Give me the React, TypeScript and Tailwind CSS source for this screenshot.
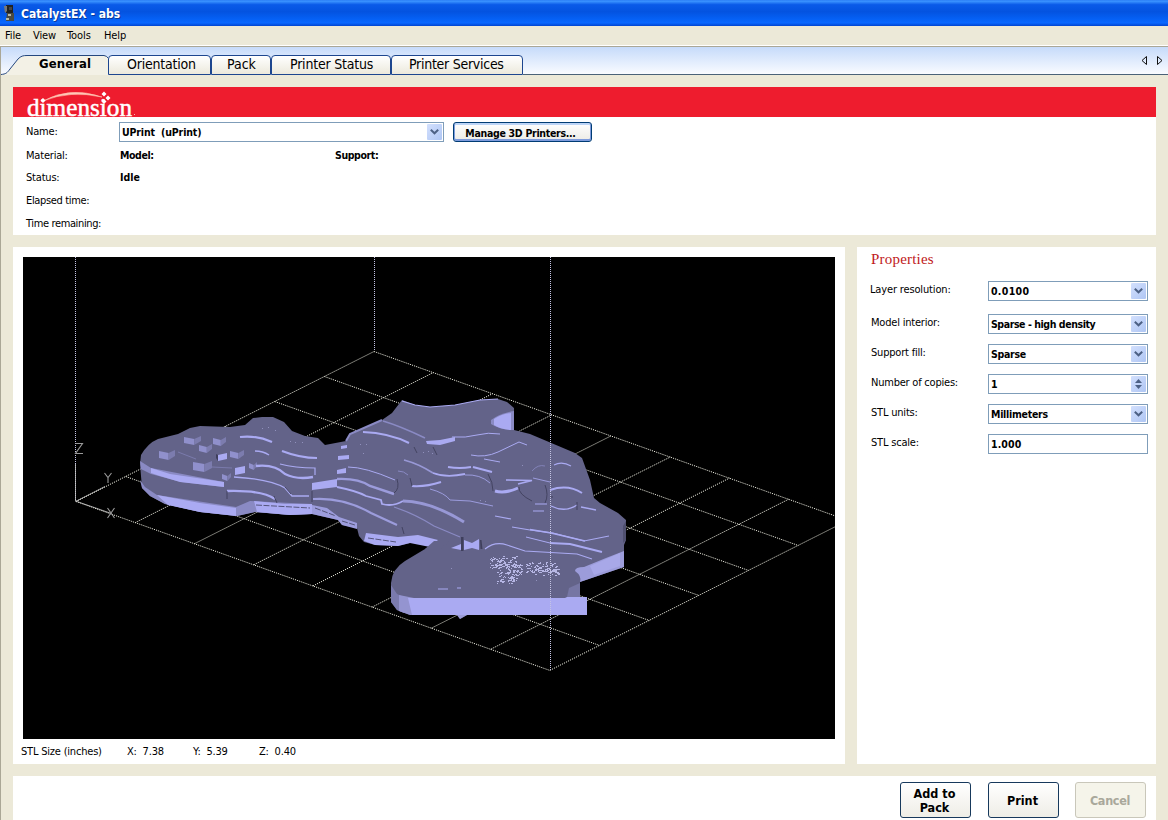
import React from "react";

const LIGHT = "#aaaaf2";
const MID = "#8a8ac4";
const BASE = "#636389";
const DARK = "#3f3f5c";

function gridLines() {
  const out: number[][] = [];
  for (let i = 0; i <= 8; i++) {
    const x = 76 + i * 59.25;
    const y = 501.5 + i * 21.1;
    out.push([x, y, x + 298, y - 150]);
  }
  for (let j = 0; j <= 6; j++) {
    const x = 76 + j * 49.67;
    const y = 501.5 - j * 25;
    out.push([x, y, x + 474, y + 169]);
  }
  return out;
}

function speckles() {
  const out: number[][] = [];
  let s = 7;
  const rnd = () => {
    s = (s * 16807) % 2147483647;
    return s / 2147483647;
  };
  const areas = [
    [490, 556, 27, 12, 80],
    [497, 564, 25, 10, 65],
    [497, 572, 20, 11, 55],
    [526, 562, 30, 10, 75],
    [534, 567, 25, 8, 45],
  ];
  areas.forEach(([x, y, w, h, n]) => {
    for (let i = 0; i < n; i++) out.push([Math.round(x + rnd() * w), Math.round(y + rnd() * h), rnd() > 0.5 ? 2 : 1]);
  });
  return out;
}

/* Small cubes standing on the left lobe: x, y, width, height */
const cubes = [
  [159, 449, 16, 11],
  [184, 435, 17, 10],
  [199, 443, 13, 10],
  [213, 436, 13, 10],
  [193, 460, 19, 12],
  [230, 449, 14, 10],
  [249, 461, 8, 9],
  [222, 472, 9, 9],
];

const ridges: [string, number, string][] = [
  ["M240 437 Q256 435 272 442", 2.2, LIGHT],
  ["M255 451 Q263 451 269 455", 1.5, LIGHT],
  ["M282 451 Q300 458 317 458", 2, LIGHT],
  ["M256 466 Q275 464 285 474 Q297 480 313 477", 2.4, LIGHT],
  ["M280 464 Q295 468 315 468 V475", 1.2, LIGHT],
  ["M234 477 Q270 479 285 488 L292 496 L309 496", 1.4, LIGHT],
  ["M227 491 Q262 490 275 499", 2.4, LIGHT],
  ["M383 421 Q400 426 425 438", 1.6, MID],
  ["M363 432 Q389 433 409 443", 2, LIGHT],
  ["M348 467 Q365 467 395 480", 1, LIGHT],
  ["M337 479 Q358 478 370 486 L394 494", 2.4, "#9c9cdc"],
  ["M337 487 Q357 491 366 496 L381 500 L382 504 Q393 507 403 501", 1.8, LIGHT],
  ["M403 501 Q430 501 464 522", 3, "#9898d6"],
  ["M313 499 Q343 497 371 513 L397 525", 2.2, "#9c9cdc"],
  ["M394 507 Q415 514 434 526 L460 537", 1.2, MID],
  ["M398 471 Q404 471 408 475", 1, MID],
  ["M404 460 Q419 464 433 473", 1.8, "#9898d6"],
  ["M433 473 Q446 478 465 474", 1.8, LIGHT],
  ["M412 486 Q426 487 441 482", 2, LIGHT],
  ["M430 489 Q445 493 450 500 L470 501 L493 506", 0.8, LIGHT],
  ["M452 437 Q466 438 477 435 Q488 432 500 434", 1, LIGHT],
  ["M471 455 Q485 458 498 452 L519 442 L527 445", 1, LIGHT],
  ["M448 467 Q460 469 471 467", 1.8, LIGHT],
  ["M473 467 L492 472", 2.2, LIGHT],
  ["M484 459 L500 462", 1, LIGHT],
  ["M465 475 Q480 474 490 483", 0.8, LIGHT],
  ["M495 491 Q505 494 518 488", 3, LIGHT],
  ["M506 480 L532 480.500 L518 484", 1.5, LIGHT],
  ["M533 478 L550 482", 0.8, LIGHT],
  ["M554 465 Q562 461 571 466", 1.2, LIGHT],
  ["M532 471 Q538 464 545 466", 0.8, MID],
  ["M550 490 Q568 484 582 493", 2, LIGHT],
  ["M551 506 Q565 513 577 505", 1.3, LIGHT],
  ["M581 507 L596 510", 1.3, LIGHT],
  ["M535 504 L547 504 M533 511 L544 511", 1, LIGHT],
  ["M495 516 L511 519", 1.2, LIGHT],
  ["M512 527 L530 530 L553 533 L584 541 L609 536", 1.2, LIGHT],
  ["M530 529.500 L551 533 L585 541", 1.6, LIGHT],
  ["M526 537 L550 543", 1, LIGHT],
  ["M550 543 L570 544 L602 552", 2, LIGHT],
  ["M485 549 Q495 541 507 545 L525 551 L577 554 L592 559", 1.1, LIGHT],
  ["M438 589 h10 M457 588 h4", 1, LIGHT],
  ["M178 452 L196 459 M212 467 L232 468", 0.6, MID],
];

const shadows = [
  "M227 491 V499",
  "M274 496 L277 503",
  "M285 487 L291 494",
  "M312 491 V502",
  "M397 479 Q400 489 394 493",
  "M402 527 L404 534",
  "M414 447 L417 453",
  "M433 447 L437 455",
  "M410 478 L412 486",
  "M488 474 Q493 482 493 491",
  "M519 487 Q518 494 532 501 M545 485 Q549 495 545 503",
  "M577 502 V510",
  "M550 497 H553",
];

function Viewport() {
  return (
    <svg className="block h-[482px] w-[812px] bg-black" viewBox="23 257 812 482">
      <g stroke="#e4e4d8" strokeWidth="1" strokeDasharray="1.2 1.035">
        {gridLines().map(([a, b, c, d], i) => (
          <line key={i} x1={a} y1={b} x2={c} y2={d} />
        ))}
      </g>
      <g stroke="#c4c4e4" strokeDasharray="1 1" shapeRendering="crispEdges">
        <path d="M75.500 257V501M374.500 257V351" />
      </g>
      <path d="M75.500 464V501L110 513M75.500 501.500L105 486.500" stroke="#c8c8c8" fill="none" strokeWidth="0.8" />

      <path
        fill={BASE}
        d="M140 464 L141 455 Q148 443 158 439 L178 434 L190 428 L200 426 L230 427 L245 425 L253 418 L262 417 L273 417 L284 422 L292 431 L305 436 L318 438 L325 445 L346 441 L350 434 L382 420 L392 413 L402 400 L415 405 L430 407 L455 405 L480 400 L498 399 L507 402 L514 408 V430 L530 434 L575 453 L582 458 L590 480 L594 498 L600 503 L618 513 L626 520 L626 540 L624 545 V567 L580 582 V597 H587 V615 H467 L460 619 L457 615 H410 L397 610 L391 602 V583 Q392 569 405 561 L425 549 L438 541 L410 543 L398 546 L375 545 L364 542 L359 536 L357 528 L342 525 L338 520 L325 517 L312 514 L290 515 L255 512 L237 516 L200 512 L165 504 L150 496 L142 488 Z"
      />
      <path fill={MID} d="M140 461 L151 468 L224 482 V487 L181 482 L151 474 L141 469Z" />
      <path fill={LIGHT} d="M151 468 L170 474 L224 482 V487 L180 482 L160 476 L151 473Z" />
      <path fill={MID} d="M140 480 L145 487 L157 495 L236 507 L250 501 L312 504 V514 L290 515 L255 512 L237 516 L200 512 L165 504 L150 496 L142 488 Z" />
      <path fill={LIGHT} d="M157 495 L200 503 L236 508 V516 L200 512 L168 505Z M254 501 L285 504 L312 504 V514 L290 515 L257 512Z" />
      <path fill="#9c9cdc" d="M312 505 L327 508 L339 517 L357 523 V529 L342 525 L338 520 L325 517 L312 514Z" />
      <path fill={LIGHT} d="M366 533 L398 537 L418 535 L438 540 L430 547 L410 543 L398 546 L375 545 L364 541Z" />
      <path fill={BASE} d="M425 549 L434 541 L450 541 L440 549Z" />
      <path d="M256 505 L310 508 M315 508 L336 516 M342 521 L355 525 M368 538 L396 542" stroke={DARK} strokeWidth="0.8" strokeDasharray="6 1.500" fill="none" />
      <path fill={LIGHT} d="M312 483 L337 479 V487 L312 490Z M341 446 l6 -1 v3 l-6 1z M338 456 l11 -1 v4 l-11 1z M337 470 l9 -2 v5 l-9 1z" />
      <path d="M346 441 L350 434 L382 420" stroke={MID} strokeWidth="2" fill="none" />
      <path d="M402 401 L415 405 L430 407 L455 405 L480 400 L498 399" stroke={LIGHT} strokeWidth="1.200" fill="none" />
      <path fill={MID} d="M491 420 Q500 413 514 411 V430 Q500 430 491 424Z" />
      <path fill={LIGHT} d="M494 419 Q502 414 511 413 V430 Q500 429 494 425Z" />
      <path fill={LIGHT} d="M426 441 L440 440 L455 437 V441 L440 445 L427 444Z" />

      {cubes.map(([x, y, w, h], i) => (
        <g key={i}>
          <path fill="#9090cc" d={`M${x} ${y + 2} L${x + w * 0.6} ${y + 4} V${y + h} L${x} ${y + h - 2}Z`} />
          <path fill="#7c7cae" d={`M${x + w * 0.6} ${y + 4} L${x + w} ${y + 1} V${y + h - 4} L${x + w * 0.6} ${y + h}Z`} />
        </g>
      ))}
      <path fill={LIGHT} d="M218 455 l9 -2 v6 l-9 2z M235 468 l10 -2 v7 l-10 2z" />
      <path fill={DARK} d="M216 454 l2 1 v6 l-2 -3z" />

      <g fill="none">
        {ridges.map(([d, w, c], i) => (
          <path key={i} d={d} strokeWidth={w} stroke={c} />
        ))}
        {shadows.map((d, i) => (
          <path key={i} d={d} stroke={DARK} strokeWidth="0.900" />
        ))}
      </g>
      <path fill={LIGHT} d="M464 540 L472 543 L479 539 V550 L472 548 L464 550Z M451 548 L461 544 V550Z" />
      <path fill={DARK} d="M461 537 h2.500 v14 h-2.500z M480 540 h1.500 l1 9 h-2z" />

      <path fill="#7a7aae" d="M391 585 L397 594 L404 597 V613 L397 610 L391 602Z" />
      <path fill="#9494d0" d="M399 595 L414 598 V615 H410 L399 611Z" />
      <path fill={LIGHT} d="M408 598 H565 L567 597 H587 V615 H412Z" />
      <path fill="#9c9cd8" d="M457 615 H467 L460 619Z" />
      <path fill="#7676a4" d="M567 597 L569 588 L580 583 V597Z" />
      <path fill="#9c9cda" d="M575 571 Q575 567 584 567 L606 558 L624 551 V567 L580 582 Q582 576 575 571Z" />
      <path fill="#a8a8e8" d="M590 566 L620 553 V566 L594 575Z" />
      <path fill="#505070" d="M623 526 L626 521 V540 L623 543Z" />

      <g fill="#b6b6e4" shapeRendering="crispEdges">
        {speckles().map(([x, y, w], i) => (
          <rect key={i} x={x} y={y} width={w} height="1" />
        ))}
      </g>
      <g fill="#9090bc" shapeRendering="crispEdges">
        {[[262, 428], [268, 427], [275, 430], [290, 441], [295, 442], [302, 442], [360, 444], [366, 444], [363, 453], [423, 452], [428, 451], [432, 453], [522, 465], [480, 500], [485, 501], [451, 568], [536, 580]].map(([x, y], i) => (
          <rect key={i} x={x} y={y} width="1" height="1" />
        ))}
      </g>
      <path d="M550.500 257V670" stroke="#c4c4e4" strokeDasharray="1 1" shapeRendering="crispEdges" />
      <g fill="none" stroke="#9a9a9a" strokeWidth="1.100">
        <path d="M75.500 443.500H82.500L75.500 453.500H83" />
        <path d="M104.500 473L108 477.500L111.500 473M108 477.500V483" />
        <path d="M107.500 508L114.500 518M114.500 508L107.500 518" />
      </g>
    </svg>
  );
}

function DropArrow() {
  return (
    <span className="flex h-4 w-[15px] shrink-0 items-center justify-center rounded-[1px] bg-linear-to-br from-[#d3e0fd] to-[#afc6f4]">
      <svg width="9" height="6" viewBox="0 0 9 6">
        <path d="M0.800 0.800L4.500 4.300L8.200 0.800" fill="none" stroke="#4d6185" strokeWidth="2" />
      </svg>
    </span>
  );
}

function Spinner() {
  return (
    <span className="flex h-4 w-[15px] shrink-0 flex-col items-center justify-between rounded-[1px] bg-linear-to-br from-[#d3e0fd] to-[#afc6f4] py-[3px]">
      <svg width="7" height="4" viewBox="0 0 7 4"><path d="M0 4L3.500 0L7 4Z" fill="#4d6185" /></svg>
      <svg width="7" height="4" viewBox="0 0 7 4"><path d="M0 0L3.500 4L7 0Z" fill="#4d6185" /></svg>
    </span>
  );
}

function Field({ text, track = "", kind = "select" }: { text: string; track?: string; kind?: "select" | "spin" | "text" }) {
  return (
    <div className="flex h-5 w-[160px] items-center justify-between border border-[#7f9db9] bg-white pr-px pl-[2px] text-[10.5px] font-bold">
      <span className={track}>{text}</span>
      {kind === "select" && <DropArrow />}
      {kind === "spin" && <Spinner />}
    </div>
  );
}

const tabs = [
  { label: "Orientation", box: "w-[103px] pl-[18px]", track: "tracking-[-0.2px]" },
  { label: "Pack", box: "w-[60px] pl-[15px]", track: "" },
  { label: "Printer Status", box: "w-[120px] pl-[18px]", track: "tracking-[-0.2px]" },
  { label: "Printer Services", box: "w-[132px] pl-[17px]", track: "tracking-[-0.27px]" },
];

const properties: { label: string; text: string; kind?: "select" | "spin" | "text"; h: string; track?: string; labelTrack: string }[] = [
  { label: "Layer resolution:", text: "0.0100", h: "h-[33px]", track: "tracking-[0.3px]", labelTrack: "-ml-px w-[118px] tracking-[-0.15px]" },
  { label: "Model interior:", text: "Sparse - high density", h: "h-[30px]", track: "tracking-[-0.43px]", labelTrack: "w-[117px] tracking-[-0.2px]" },
  { label: "Support fill:", text: "Sparse", h: "h-[30px]", track: "tracking-[-0.3px]", labelTrack: "w-[117px] tracking-[-0.2px]" },
  { label: "Number of copies:", text: "1", kind: "spin", h: "h-[30px]", labelTrack: "w-[117px] tracking-[-0.22px]" },
  { label: "STL units:", text: "Millimeters", h: "h-[30px]", track: "tracking-[-0.27px]", labelTrack: "w-[117px] tracking-[-0.2px]" },
  { label: "STL scale:", text: "1.000", kind: "text", h: "h-[30px]", track: "tracking-[0.1px]", labelTrack: "w-[117px] tracking-[-0.2px]" },
];

export default function App() {
  return (
    <div className="flex h-[820px] w-[1168px] flex-col overflow-hidden bg-[#ece9d8] font-['DejaVu_Sans_Condensed','Noto_Sans',sans-serif] text-[11px] leading-[14px] whitespace-pre text-black">
      <header className="flex h-[26px] shrink-0 items-center bg-[linear-gradient(180deg,#2b7df5_0%,#3a92ff_5%,#0a5ae8_18%,#0453e0_45%,#0560f4_72%,#0a68ff_88%,#0144d0_100%)] pl-1">
        <svg width="11" height="18" viewBox="0 0 11 18" className="mb-px">
          <path d="M2 1H9V9H2Z" fill="#222" />
          <path d="M0 2H3V7L1 9Z" fill="#777" />
          <path d="M3 9H10V17H2Z" fill="#4a4a42" />
          <path d="M4 10H7V12H4ZM2 14H5V16H2Z" fill="#b8b8a8" />
          <path d="M5 3H8V6H5Z" fill="#444" />
        </svg>
        <span className="ml-[6px] pt-px text-[12px] font-bold text-white [text-shadow:1px_1px_0_#0a3a9a]">CatalystEX - abs</span>
      </header>

      <nav className="flex h-[19px] shrink-0 items-center pl-[5px] tracking-[-0.1px]">
        <span className="w-7">File</span>
        <span className="w-[34px]">View</span>
        <span className="w-[37px]">Tools</span>
        <span>Help</span>
      </nav>

      <div className="h-px shrink-0 bg-white" />
      <div className="flex h-[29px] shrink-0 items-end border-t border-l border-[#aaa796] bg-linear-to-b from-[#c6dbfa] to-[#fbfcff] text-[14px]">
        <div className="relative h-5 w-[107px]">
          <svg className="absolute inset-0" width="107" height="20" viewBox="0 0 107 20">
            <path d="M0 20V19.500C5 19 6 18 9 14L17 4C20 1 22 0.500 26 0.500H103Q107 1 107 4V20Z" fill="#f3f1e6" />
            <path d="M0 19.500C5 19 6 18 9 14L17 4C20 1 22 0.500 26 0.500H103Q106 1 107 3" fill="none" stroke="#24477f" />
          </svg>
          <span className="relative block pt-[2px] pl-[38px] text-[13px] font-bold tracking-[0.1px]">General</span>
        </div>
        {tabs.map((t) => (
          <div key={t.label} className={`h-5 rounded-t-[4px] border border-[#1d468f] bg-linear-to-b from-white to-[#ece9dc] pt-px ${t.box}`}>
            <span className={t.track}>{t.label}</span>
          </div>
        ))}
        <div className="flex h-full flex-1 items-center justify-end gap-2 border-b border-[#4a6278] pr-[5px]">
          <svg width="7" height="9" viewBox="0 0 7 9"><path d="M5.500 0.500V8.500L1 4.500Z" fill="none" stroke="#111" /></svg>
          <svg width="7" height="9" viewBox="0 0 7 9"><path d="M1.500 0.500V8.500L6 4.500Z" fill="none" stroke="#111" /></svg>
        </div>
      </div>

      <main className="flex flex-1 flex-col gap-3 border-l border-[#aaa796] pt-3 pr-3 pl-3">
        <section className="h-[148px] shrink-0 bg-white">
          <div className="h-[30px] bg-[#ee1c2e]">
            <svg width="140" height="30" viewBox="13 87 140 30" className="block overflow-visible">
              <text x="27" y="115.500" textLength="105" lengthAdjust="spacingAndGlyphs" fill="#fff" stroke="#fff" strokeWidth="0.500" fontFamily="Liberation Serif, serif" fontSize="25">dimension</text>
              <path d="M43 101Q70 86 102 97Q70 90 43 101Z" fill="#ffc9b8" stroke="#ffb9a8" strokeWidth="0.600" />
              <path d="M43 98l2.500 2.500L43 103l-2.500-2.500ZM104 91.500l2.500 2.500-2.500 2.500-2.500-2.500ZM108 95.500l2.500 2.500-2.500 2.500-2.500-2.500ZM104 99l2.500 2.500-2.500 2.500-2.500-2.500Z" fill="#fff" />
              <rect x="134" y="114" width="1" height="1" fill="#ffb0b0" />
            </svg>
          </div>
          <div className="flex pl-[13px]">
            <div className="w-[93px] tracking-[-0.2px]">
              <div className="flex h-[27px] items-center pt-[2px]">Name:</div>
              <div className="flex h-[22px] items-center pt-px">Material:</div>
              <div className="flex h-[23px] items-center">Status:</div>
              <div className="flex h-[23px] items-center tracking-[-0.35px]">Elapsed time:</div>
              <div className="flex h-[23px] items-center tracking-[-0.37px]">Time remaining:</div>
            </div>
            <div className="text-[10.5px] font-bold">
              <div className="flex h-[27px] items-start pt-[5px]">
                <div className="flex h-5 w-[325px] items-center justify-between border border-[#7f9db9] pr-px pl-[2px]">
                  <span className="tracking-[-0.15px]">UPrint  (uPrint)</span>
                  <DropArrow />
                </div>
                <button className="ml-[9px] flex h-5 w-[139px] items-center justify-center rounded-[3px] border border-[#003c74] bg-linear-to-b from-white to-[#ecebe5] pt-px pr-1 shadow-[inset_0_-1px_0_1px_#7d9bdc,inset_0_1px_0_1px_#bcd4f6]">
                  <span className="tracking-[-0.3px]">Manage 3D Printers...</span>
                </button>
              </div>
              <div className="flex h-[22px] items-center pl-px tracking-[-0.4px]">
                <span className="w-[215px]">Model:</span>
                <span>Support:</span>
              </div>
              <div className="flex h-[23px] items-center pb-px pl-px">Idle</div>
            </div>
          </div>
        </section>

        <div className="flex h-[517px] shrink-0 gap-3">
          <section className="w-[832px] bg-white pt-[10px] pl-[10px]">
            <Viewport />
            <div className="flex pt-[6px] tracking-[-0.2px]">
              <span className="-ml-[2px] w-[106px]">STL Size (inches)</span>
              <span className="w-[66px]">X:  7.38</span>
              <span className="w-[66px]">Y:  5.39</span>
              <span>Z:  0.40</span>
            </div>
          </section>
          <section className="flex-1 bg-white pl-[14px]">
            <h2 className="pt-[3px] font-['Liberation_Serif',serif] text-[15px] leading-[18px] tracking-[0.2px] text-[#c01820]">Properties</h2>
            <div className="pt-[13px]">
              {properties.map((p) => (
                <div key={p.label} className={`flex items-start ${p.h}`}>
                  <span className={`pt-[2px] ${p.labelTrack}`}>{p.label}</span>
                  <Field text={p.text} kind={p.kind} track={p.track} />
                </div>
              ))}
            </div>
          </section>
        </div>

        <footer className="flex flex-1 items-start justify-end bg-white pt-[6px] pr-[10px] text-[12.5px] leading-[14px] font-bold">
          <button className="flex h-9 w-[71px] items-center justify-center rounded-[3px] border border-[#17395c] bg-linear-to-b from-white to-[#eeede6] pt-px pr-[2px] text-center">{"Add to\nPack"}</button>
          <button className="ml-[17px] flex h-9 w-[71px] items-center justify-center rounded-[3px] border border-[#17395c] bg-linear-to-b from-white to-[#eeede6] pt-px pr-[2px]">Print</button>
          <button className="ml-4 flex h-9 w-[71px] items-center justify-center rounded-[3px] border border-[#c9c7ba] bg-[#f5f4ea] pt-px pr-px tracking-[-0.3px] text-[#a9a89b]">Cancel</button>
        </footer>
      </main>
    </div>
  );
}
